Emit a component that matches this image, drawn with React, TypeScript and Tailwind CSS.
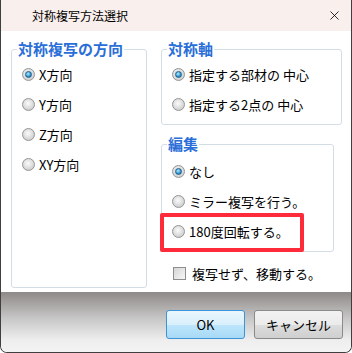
import { X } from 'lucide-react';

const font = { fontFamily: '"Noto Sans CJK JP", "Noto Sans", sans-serif' };

function Radio({ checked }: { checked?: boolean }) {
  return (
    <span className="flex h-[13px] w-[13px] shrink-0 items-center justify-center rounded-full border border-[#959595] bg-[radial-gradient(circle_at_45%_40%,#fbfbfb,#d2d2d2_70%,#bdbdbd)]">
      {checked && (
        <span className="h-[7px] w-[7px] rounded-full border border-[#1d5f8f] bg-[radial-gradient(circle_at_40%_35%,#b8ecff,#2d95d2_60%,#125d95)]" />
      )}
    </span>
  );
}

function Option({ label, checked }: { label: string; checked?: boolean }) {
  return (
    <label className="flex h-[30px] items-center gap-[4px] text-[13px] leading-none text-black">
      <Radio checked={checked} />
      <span>{label}</span>
    </label>
  );
}

function Group({
  title,
  className,
  children,
}: {
  title: string;
  className: string;
  children: React.ReactNode;
}) {
  return (
    <fieldset className={`rounded-[3px] border border-[#d3dde5] ${className}`}>
      <legend className="ml-[5px] px-[1px] text-[15px] font-bold leading-[18px] text-[#2a6ed8]">
        {title}
      </legend>
      {children}
    </fieldset>
  );
}

export default function App() {
  return (
    <div
      style={font}
      className="flex h-[353px] w-[352px] flex-col overflow-hidden rounded-b-[7px] border-x border-b border-[#3f3f3f] bg-white"
    >
      <div className="flex h-[31px] shrink-0 items-center justify-between bg-[#f9efec] pl-[31px] pr-[9px]">
        <span className="text-[12px] text-black">対称複写方法選択</span>
        <X size={15} strokeWidth={1.3} className="text-black" />
      </div>

      <div className="flex flex-1 gap-[14px] pl-[10px] pt-[9px]">
        <Group title="対称複写の方向" className="h-[248px] w-[136px]">
          <div className="flex flex-col pl-[10px] pt-px">
            <Option label="X方向" checked />
            <Option label="Y方向" />
            <Option label="Z方向" />
            <Option label="XY方向" />
          </div>
        </Group>

        <div className="relative flex w-[181px] flex-col">
          <Group title="対称軸" className="w-[181px] pb-[5px]">
            <div className="flex flex-col pl-[10px] pt-px">
              <Option label="指定する部材の 中心" checked />
              <Option label="指定する2点の 中心" />
            </div>
          </Group>

          <Group title="編集" className="mt-[10px] w-[173px] pb-[5px]">
            <div className="flex flex-col pl-[10px] pt-[3px]">
              <Option label="なし" checked />
              <Option label="ミラー複写を行う。" />
              <Option label="180度回転する。" />
            </div>
          </Group>

          <label className="mt-[11px] flex h-[20px] items-center gap-[6px] pl-[12px] text-[13px] leading-none text-black">
            <span className="h-[13px] w-[13px] shrink-0 border border-[#8e8e8e] bg-[linear-gradient(135deg,#d6d6d6,#f6f6f6)]" />
            <span>複写せず、移動する。</span>
          </label>

          <div className="absolute left-[-1px] top-[173px] h-[39px] w-[144px] rounded-[2px] border-4 border-[#ff2b3a]" />
        </div>
      </div>

      <div className="flex h-[60px] shrink-0 items-start justify-end gap-[9px] bg-[linear-gradient(180deg,#8d8987,#c9c8c8_45%,#eeeeee_80%,#f3f3f3)] pr-[8px] pt-[18px]">
        <button className="flex h-[29px] w-[79px] items-center justify-center rounded-[3px] border border-[#3c94d8] bg-[linear-gradient(180deg,#eaf6fd,#d9f0fc_50%,#bee6fd_51%,#a7d9f5)] text-[13px] text-black">
          OK
        </button>
        <button className="flex h-[29px] w-[89px] items-center justify-center rounded-[3px] border border-[#8a8a8a] bg-[linear-gradient(180deg,#f2f2f2,#ebebeb_50%,#dddddd_51%,#cfcfcf)] text-[13px] text-black">
          キャンセル
        </button>
      </div>
    </div>
  );
}
